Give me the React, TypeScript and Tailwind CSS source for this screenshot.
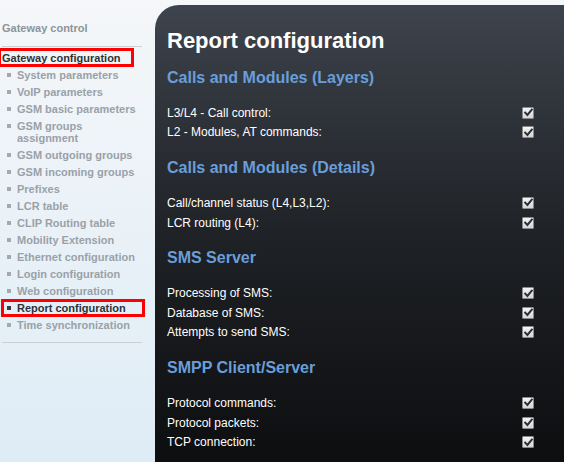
import React from "react";

const items: { label: React.ReactNode; active?: boolean }[] = [
  { label: "System parameters" },
  { label: "VoIP parameters" },
  { label: "GSM basic parameters" },
  { label: (<>GSM groups<br />assignment</>) },
  { label: "GSM outgoing groups" },
  { label: "GSM incoming groups" },
  { label: "Prefixes" },
  { label: "LCR table" },
  { label: "CLIP Routing table" },
  { label: "Mobility Extension" },
  { label: "Ethernet configuration" },
  { label: "Login configuration" },
  { label: "Web configuration" },
  { label: "Report configuration", active: true },
  { label: "Time synchronization" },
];

const sections: { title: string; rows: string[] }[] = [
  { title: "Calls and Modules (Layers)", rows: ["L3/L4 - Call control:", "L2 - Modules, AT commands:"] },
  { title: "Calls and Modules (Details)", rows: ["Call/channel status (L4,L3,L2):", "LCR routing (L4):"] },
  { title: "SMS Server", rows: ["Processing of SMS:", "Database of SMS:", "Attempts to send SMS:"] },
  { title: "SMPP Client/Server", rows: ["Protocol commands:", "Protocol packets:", "TCP connection:"] },
];

function Check() {
  return (
    <span className="flex h-[12px] w-[12px] items-center justify-center rounded-[1px] border border-[#8a8a8a] bg-gradient-to-b from-[#f4f4f4] to-[#d6d6d6]">
      <svg width="9" height="9" viewBox="0 0 9 9">
        <path d="M1.2 4.6 L3.4 7 L7.8 1.6" fill="none" stroke="#2b2f36" strokeWidth="2" strokeLinecap="square" />
      </svg>
    </span>
  );
}

export default function App() {
  return (
    <div
      className="flex h-[462px] w-[564px] overflow-hidden bg-gradient-to-b from-[#f5f7f9] to-[#deecf6]"
      style={{ fontFamily: '"Liberation Sans", Arial, sans-serif' }}
    >
      <div className="w-[155px] shrink-0 pt-[20px]">
        <div className="pl-[2px] text-[11px] font-bold leading-[17px] text-[#8c949b]">Gateway control</div>
        <div className="ml-[2px] mt-[9px] h-px w-[140px] bg-[#cdd1d4]" />
        <div className="relative mt-[3px] pl-[2px] text-[11px] font-bold leading-[17px] text-[#2e3236]">
          Gateway configuration
          <span className="absolute left-[-2px] top-[-2px] h-[19px] w-[136px] border-[3px] border-[#ff0000]" />
        </div>
        <div className="-mt-px flex flex-col">
          {items.map((it, i) => (
            <div
              key={i}
              className={`relative flex py-[2.5px] text-[11px] font-bold leading-[12px] ${it.active ? "text-[#2e3236]" : "text-[#9aa1a8]"}`}
            >
              <span className="flex w-[17px] shrink-0 justify-end pr-[6px] pt-[4px]">
                <span className={`block h-[4px] w-[4px] ${it.active ? "bg-[#3a3e42]" : "bg-[#a3a9ae]"}`} />
              </span>
              <span>{it.label}</span>
              {it.active && (
                <span className="absolute left-[1px] top-[-0.5px] h-[18px] w-[144px] border-[3px] border-[#ff0000]" />
              )}
            </div>
          ))}
        </div>
        <div className="ml-[2px] mt-[8.5px] h-px w-[140px] bg-[#cdd1d4]" />
      </div>
      <div className="mt-[5px] flex-1 rounded-tl-[24px] bg-gradient-to-b from-[#3e444d] via-[#1f2226] to-[#0d0e10] pl-[12px] pr-[30px] pt-[23px]">
        <div className="text-[22px] font-bold leading-[26px] text-white">Report configuration</div>
        {sections.map((s, i) => (
          <div key={i} className={i === 0 ? "mt-[14px]" : "mt-[16px]"}>
            <div className="mb-[15px] text-[16px] font-bold leading-[20px] text-[#6a9ed8]">{s.title}</div>
            {s.rows.map((r) => (
              <div key={r} className="flex h-[19.6px] items-center justify-between text-[12px] leading-[14px] text-white">
                <span>{r}</span>
                <Check />
              </div>
            ))}
          </div>
        ))}
      </div>
    </div>
  );
}
